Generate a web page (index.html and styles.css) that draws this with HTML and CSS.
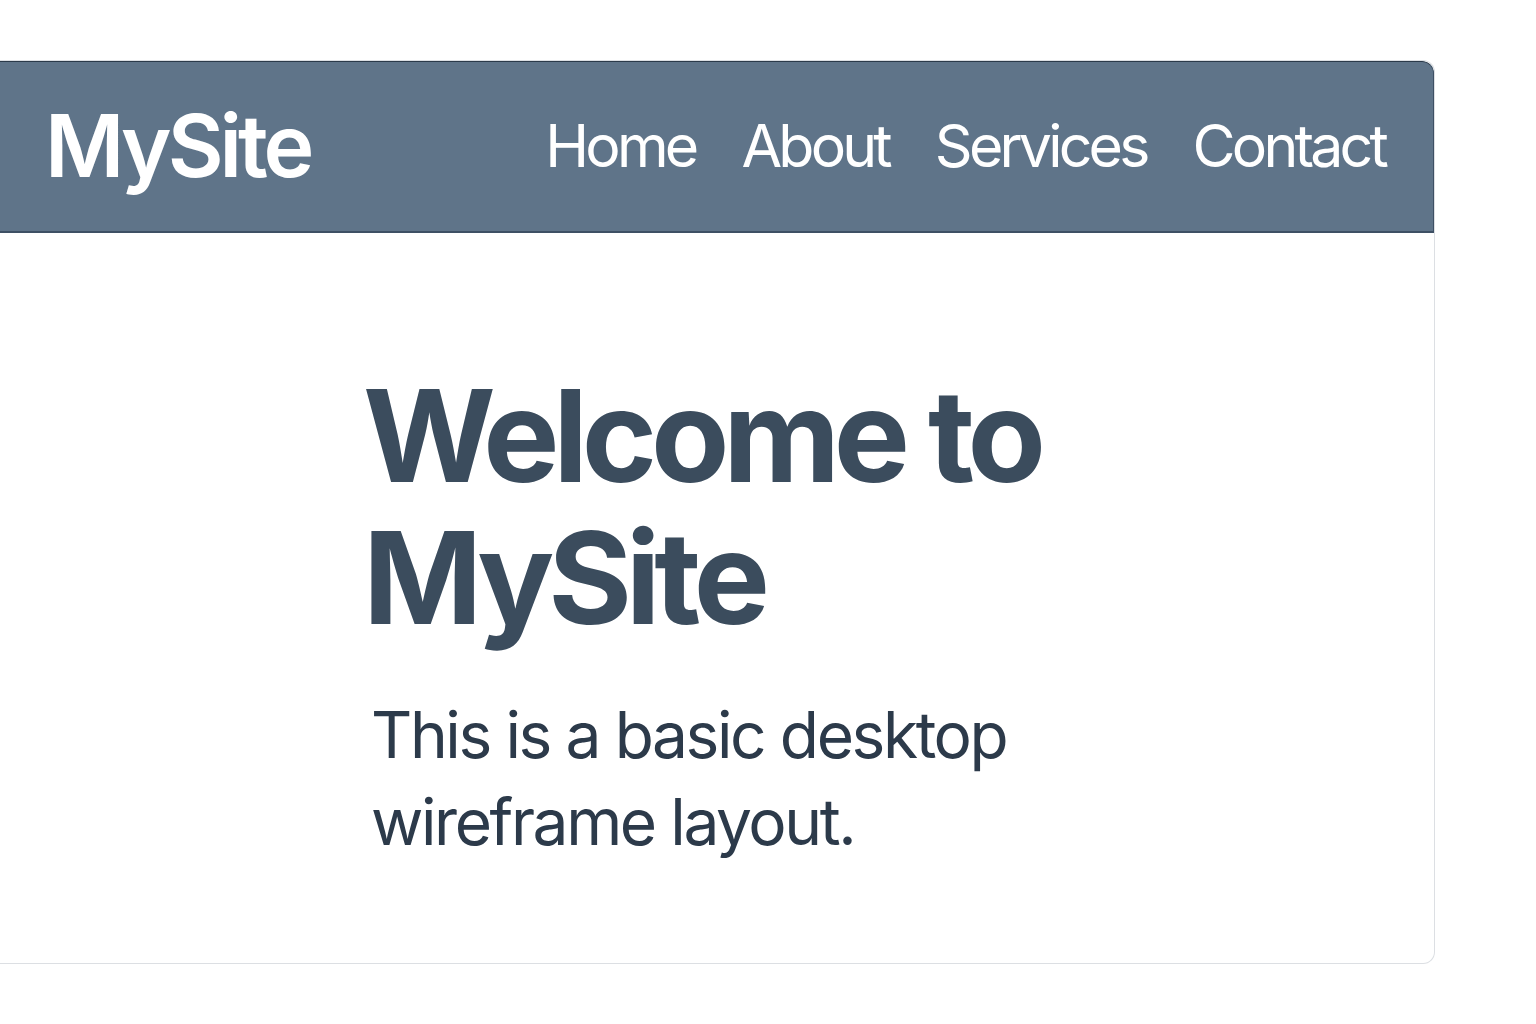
FILE: index.html
```html
<!DOCTYPE html>
<html lang="en">
<head>
<meta charset="utf-8">
<title>MySite</title>
<link rel="stylesheet" href="styles.css">
</head>
<body>
<div class="card">
  <header class="topbar">
    <div class="logo">MySite</div>
    <nav class="nav">
      <a href="#">Home</a>
      <a href="#">About</a>
      <a href="#">Services</a>
      <a href="#">Contact</a>
    </nav>
  </header>
  <main class="hero">
    <h1 class="title">Welcome to<br>MySite</h1>
    <p class="lead">This is a basic desktop<br>wireframe layout.</p>
  </main>
</div>
</body>
</html>
```
FILE: styles.css
```css
html, body {
  margin: 0;
  padding: 0;
  background: #ffffff;
}
body {
  padding-top: 60px;
  font-family: Inter, "Noto Sans", sans-serif;
}
.card {
  width: 1435px;
  height: 904px;
  box-sizing: border-box;
  border: 1px solid #dcdfe3;
  border-left: none;
  border-radius: 0 12px 12px 0;
  overflow: hidden;
  background: #fff;
}
.topbar {
  height: 172px;
  box-sizing: border-box;
  background: #5f7489;
  border-top: 1px solid #2b3a4a;
  border-bottom: 2px solid #3e5064;
  border-right: 1px solid #3e5064;
  border-radius: 0 12px 0 0;
  display: flex;
  align-items: center;
  justify-content: space-between;
  padding: 0 48px 0 45px;
}
.logo {
  color: #fff;
  font-size: 86px;
  font-weight: 600;
  letter-spacing: -4px;
  margin-top: -2px;
}
.nav {
  display: flex;
  gap: 46px;
  margin-top: -2px;
}
.nav a {
  color: #fff;
  text-decoration: none;
  font-size: 59px;
  font-weight: 400;
  letter-spacing: -3.8px;
}
.hero {
  padding: 132px 0 0 363px;
  color: #3a4b5c;
}
.title {
  margin: 0;
  font-size: 128px;
  font-weight: 700;
  line-height: 142px;
  letter-spacing: -6.2px;
  color: #3b4c5d;
}
.lead {
  margin: 42px 0 0 8px;
  font-size: 64px;
  font-weight: 400;
  line-height: 87px;
  letter-spacing: -2.4px;
  color: #2c3a4a;
}
```
